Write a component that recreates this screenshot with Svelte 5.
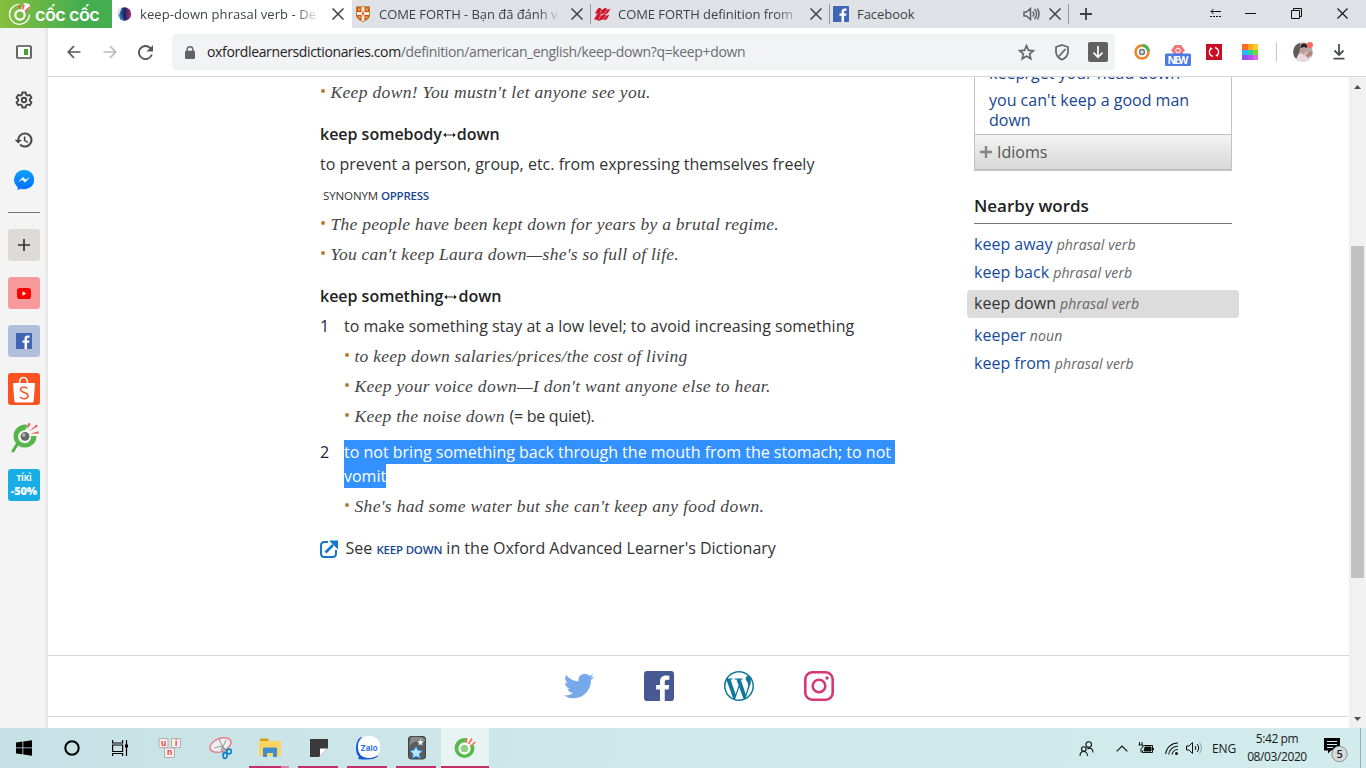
<script>
  const tabs = [
    { title: 'keep-down phrasal verb - Def', icon: 'oxford', active: true, width: 181 },
    { title: 'COME FORTH - Bạn đã đánh v', icon: 'shield', width: 184 },
    { title: 'COME FORTH definition from', icon: 'macmillan', width: 184 },
    { title: 'Facebook', icon: 'facebook', sound: true, width: 166 }
  ];
  const nearby = [
    { word: 'keep away', kind: 'phrasal verb' },
    { word: 'keep back', kind: 'phrasal verb' },
    { word: 'keep down', kind: 'phrasal verb', current: true },
    { word: 'keeper', kind: 'noun' },
    { word: 'keep from', kind: 'phrasal verb' }
  ];
  const fShape = 'M16.6 24V14.7h3.1l.5-3.6h-3.6V8.8c0-1 .3-1.8 1.8-1.8h1.9V3.8c-.3 0-1.5-.2-2.8-.2-2.8 0-4.7 1.7-4.7 4.8v2.7H9.7v3.6h3.1V24z';
</script>

{#snippet cross()}
  <svg class="cross" width="12" height="12" viewBox="0 0 12 12"><path d="M.5.5l11 11M11.5.5l-11 11" stroke="#3f4145" stroke-width="1.5" fill="none" /></svg>
{/snippet}

{#snippet facebook(size, color, radius)}
  <svg width={size} height={size} viewBox="0 0 24 24"><rect width="24" height="24" rx={radius} fill={color} /><path d={fShape} fill="#fff" /></svg>
{/snippet}

{#snippet coccoc(size)}
  <svg width={size} height={size} viewBox="0 0 32 32">
    <path d="M10 22L5 30" stroke="#55b13f" stroke-width="3" stroke-linecap="round" />
    <path d="M20 4A11.5 11.5 0 1 0 28.500 15L23 15A6.5 6.5 0 1 1 17 9.300Z" fill="#55b748" />
    <circle cx="17" cy="15.300" r="4.400" fill="#666" /><circle cx="15.700" cy="14" r="2" fill="#aaa" />
    <path d="M19 8.500l1.200-6.500 2.600.8zM21.500 10.200l7-6.700 1.400 1.800zM22.500 12.800l8-2.600.2 2.300z" fill="#ef5a4c" />
  </svg>
{/snippet}

{#snippet arrow()}
  <svg class="arrow" width="15" height="8" viewBox="0 0 15 8"><path d="M2 4h11" stroke="#333" /><path d="M4 1.800L1.200 4 4 6.200zM11 1.800L13.800 4 11 6.200z" fill="#222" /></svg>
{/snippet}

<div class="screen">
  <header class="tabbar">
    <div class="brand">
      <svg width="24" height="24" viewBox="0 0 24 24" fill="none" stroke="#fff">
        <path d="M12 2.300A10 10 0 1 0 21.500 12.500" stroke-width="1.300" />
        <circle cx="12" cy="13" r="4.700" stroke-width="2.200" />
        <path d="M13 7l3-6 5.500 1 .5 4-5.500 4z" fill="#fff" stroke="none" />
        <path d="M11.800 6.500l-1-4M14.500 7.500l1.700-5M17 9.500l4.500-4.500" stroke="#f6543f" stroke-width="1.500" />
      </svg>
      <span>cốc cốc</span>
    </div>
    {#each tabs as tab}
      <div class="tab" class:active={tab.active}>
        <span class="favicon">
          {#if tab.icon === 'oxford'}
            <svg width="16" height="16" viewBox="0 0 16 16"><defs><linearGradient id="ox" x1="0" y1="0" x2="1" y2="0"><stop offset="0" stop-color="#3b8fc0" /><stop offset=".5" stop-color="#1c2160" /><stop offset=".85" stop-color="#8c2c72" /></linearGradient></defs><circle cx="7.500" cy="8" r="6.700" fill="url(#ox)" /><path d="M1 3l4-2-2.500 7 3 6.500-4-2z" fill="#d8e6f0" /><path d="M1.500 8l3 2 3 4.500-4-1z" fill="#2378ad" /></svg>
          {:else if tab.icon === 'shield'}
            <svg width="16" height="16" viewBox="0 0 16 16"><path d="M1.500.8h13V9c0 3.300-3 5.400-6.500 6.500C4.500 14.400 1.500 12.300 1.500 9z" fill="#d6452b" stroke="#b78a28" /><path d="M6.500 1h3v14h-3zM2 6h12v3H2z" fill="#f7efd8" /><path d="M3 3.500h2.500M10.500 3.500H13M3.500 11.200H5.500M10.500 11.200h2" stroke="#f0bb2a" stroke-width="2" /><path d="M8 5.800v3.400" stroke="#d6452b" stroke-width="1.500" /></svg>
          {:else if tab.icon === 'macmillan'}
            <svg width="17" height="16" viewBox="0 0 17 16"><path d="M1 7.500L3.500 3Q6 .5 7.500 3.500q1.500.5 2.500-1 2-1.500 3 .8 1.500.7 3.500-.8L14 7q-2 2-3.800.2Q8.500 7.500 7 8.500q-2 .8-3-.8zM0 13.500L2.500 9Q5 6.500 6.500 9.500q1.500.5 2.500-1 2-1.500 3 .8 1.500.7 3.500-.8L13 13q-2 2-3.800.2-1.700.3-3.200 1.300-2 .8-3-.8z" fill="#d0152e" /><path d="M7.500 3.500L6 7.500M13 3.300L11 7M6.500 9.500L5 13.500M12 9.300L10 13" stroke="#f4a4aa" stroke-width=".7" /></svg>
          {:else}
            {@render facebook(16, '#4065b4', 1)}
          {/if}
        </span>
        <span class="title" style:width="{tab.width}px" class:fade={!tab.sound}>{tab.title}</span>
        {#if tab.sound}
          <svg width="18" height="14" viewBox="0 0 18 14" fill="none" stroke="#5f6368" stroke-width="1.500"><path d="M1 5h2.500l4-3.500v11L3.500 9H1zM9.800 4.500c1.200 1.500 1.200 3.500 0 5M11.500 2c2.800 2.600 2.800 7.400 0 10M14.300 1.500c2.300 3 2.300 8 0 11" /></svg>
        {/if}
        {@render cross()}
      </div>
    {/each}
    <svg class="newtab" width="12" height="12" viewBox="0 0 12 12"><path d="M6 0v12M0 6h12" stroke="#3c4043" stroke-width="1.800" /></svg>
    <div class="window">
      <svg width="12" height="10" viewBox="0 0 12 10" fill="none" stroke="#111"><path d="M1 3.500h10M3.500 1L1 3.500 3.500 6" /><path d="M0 8.500h12" stroke-dasharray="2 1" /></svg>
      <svg width="11" height="10" viewBox="0 0 11 10"><path d="M0 5.500h11" stroke="#111" /></svg>
      <svg width="11" height="11" viewBox="0 0 11 11" fill="none" stroke="#111"><path d="M.5 2.500h8v8h-8zM2.500 2.500v-2h8v8h-2" /></svg>
      <svg width="11" height="11" viewBox="0 0 11 11"><path d="M.5.5l10 10M10.500.5l-10 10" stroke="#111" stroke-width="1.100" /></svg>
    </div>
  </header>

  <div class="middle">
    <aside class="rail">
      <div class="cell tall"><svg width="16" height="14" viewBox="0 0 16 14"><rect x="1" y="1" width="14" height="12" rx="1" fill="#fff" stroke="#4d4d4d" stroke-width="1.700" /><path d="M8 4h4v6H8z" fill="#43a532" /></svg></div>
      <div class="cell"><svg width="20" height="20" viewBox="0 0 24 24" fill="none" stroke="#444" stroke-width="2.200"><path d="M10 3h4l.6 2.700 1.700 1 2.700-.9 2 3.500-2.100 1.800v1.900l2.100 1.800-2 3.500-2.700-.9-1.700 1L14 21h-4l-.6-2.600-1.700-1-2.700.9-2-3.500 2.100-1.800v-1.900L3 9.300l2-3.500 2.700.9 1.700-1z" stroke-linejoin="round" /><circle cx="12" cy="12" r="2.700" /></svg></div>
      <div class="cell"><svg width="18" height="18" viewBox="1 2 22 20"><path fill="#444" stroke="#444" stroke-width=".4" d="M13 3a9 9 0 0 0-9 9H1l3.900 3.900.1.100L9 12H6c0-3.900 3.100-7 7-7s7 3.100 7 7-3.100 7-7 7c-1.900 0-3.700-.8-4.900-2.100l-1.400 1.400A9 9 0 1 0 13 3zm-1 5v5l4.300 2.500.7-1.200-3.500-2.100V8z" /></svg></div>
      <div class="cell"><svg width="20" height="20" viewBox="0 0 20 20"><defs><linearGradient id="ms" x1="0" y1="0" x2="0" y2="1"><stop stop-color="#0aa2ff" /><stop offset="1" stop-color="#086cff" /></linearGradient></defs><path d="M10 0a10 9.600 0 1 1-3 18.700L3.700 20v-3A9.600 9.600 0 0 1 10 0z" fill="url(#ms)" /><path d="M4 12.300l5-5.300 2.600 2.600L16 7l-5 5.400-2.600-2.600z" fill="#fff" /></svg></div>
      <hr />
      <div class="tile add"><svg width="12" height="12" viewBox="0 0 12 12"><path d="M6 0v12M0 6h12" stroke="#333" stroke-width="1.700" /></svg></div>
      <div class="tile youtube"><svg width="14" height="11" viewBox="0 0 14 11"><rect width="14" height="11" rx="2.800" fill="#f00" /><path d="M5.500 3.200v4.600l3.800-2.300z" fill="#fff" /></svg></div>
      <div class="tile fb">{@render facebook(16, '#4065b4', 0)}</div>
      <div class="tile shopee"><svg width="26" height="30" viewBox="0 0 26 30"><path d="M8.500 9.500C8.500 1.500 16.500 1.500 16.500 9.500" fill="none" stroke="#fff" stroke-width="1.500" /><path d="M2 9h22l-1.300 18q-.2 1.500-2 1.500H5.300q-1.800 0-2-1.500z" fill="#fff" /><path d="M16.500 14.500c-2.500-2-7-2-7 1 0 3.700 7.600 2.300 7.600 6.300 0 3-4.600 4-8.100 1.200" fill="none" stroke="#f9501f" stroke-width="1.500" /></svg></div>
      <div class="tile plain">{@render coccoc(32)}</div>
      <div class="tile tiki"><b>TÍKÌ</b><strong>-50%</strong></div>
    </aside>

    <div class="browser">
      <nav class="toolbar">
        <svg width="14" height="14" viewBox="0 0 14 14" fill="none" stroke="#55585c" stroke-width="1.700"><path d="M13.500 7H1.500M7 1L1.300 7 7 13" /></svg>
        <svg width="14" height="14" viewBox="0 0 14 14" fill="none" stroke="#b9bbbe" stroke-width="1.700"><path d="M.5 7h12M7 1l5.700 6L7 13" /></svg>
        <svg width="15" height="15" viewBox="4 4 16 16"><path fill="#55585c" d="M17.650 6.350A8 8 0 1 0 19.730 14h-2.080A6 6 0 1 1 16.220 7.780L13 11h7V4z" /></svg>
        <div class="address">
          <svg width="10" height="13" viewBox="0 0 10 13"><path d="M2.200 6V3.500a2.800 2.800 0 0 1 5.600 0V6" fill="none" stroke="#5f6368" stroke-width="1.400" /><rect y="4.800" width="10" height="8.200" rx="1" fill="#5f6368" /></svg>
          <p class="url"><span>oxfordlearnersdictionaries.com</span>/definition/american_english/keep-down?q=keep+down</p>
          <svg width="17" height="17" viewBox="2 2 20 20"><path fill="#5f6368" stroke="#5f6368" stroke-width=".4" d="M22 9.240l-7.190-.62L12 2 9.190 8.630 2 9.240l5.460 4.730L5.820 21 12 17.270 18.180 21l-1.630-7.030zM12 15.400l-3.760 2.270 1-4.280-3.320-2.880 4.380-.38L12 6.100l1.710 4.040 4.380.38-3.320 2.880 1 4.280z" /></svg>
          <svg width="16" height="17" viewBox="0 0 16 17" fill="none" stroke="#5f6368" stroke-width="1.700"><path d="M8 1l6 2v5c0 3.700-2.500 6-6 7.800C4.500 14 2 11.700 2 8V3zM11.500 5L5 12.200" /></svg>
          <span class="save"><svg width="12" height="13" viewBox="0 0 12 13" fill="none" stroke="#fff" stroke-width="1.700"><path d="M6 0v11M1.500 6.700L6 11.300l4.500-4.600" /></svg></span>
        </div>
        <div class="extensions">
          <svg width="16" height="16" viewBox="0 0 16 16"><circle cx="8" cy="8" r="6.500" fill="none" stroke="#f08127" stroke-width="2.500" /><path d="M8.500 1.500A6.500 6.500 0 0 1 14.500 7" fill="none" stroke="#4caf50" stroke-width="3" /><circle cx="8" cy="8" r="3.200" fill="#6c7278" /><path d="M8 5.800v4.400M5.800 8h4.400" stroke="#fff" /></svg>
          <svg class="new" width="26" height="22" viewBox="0 0 26 22"><path d="M7 5l3-4h6l3 4 1 2-2 1v2H8V8L6 7z" fill="#ee7777" /><circle cx="13" cy="6.500" r="2.300" fill="none" stroke="#fff" /><rect y="9.500" width="26" height="12.500" rx="1.500" fill="#4b7be5" /><text x="13" y="19.500" text-anchor="middle" fill="#fff" font-family="Open Sans, sans-serif" font-size="10.500" font-weight="700" textLength="21">NEW</text></svg>
          <svg width="16" height="16" viewBox="0 0 16 16"><path d="M0 0h16v16H0z" fill="#cb0d24" /><path d="M7 12.500A4.600 4.600 0 0 1 4.500 5M9 3.500a4.600 4.600 0 0 1 2.500 7.500" fill="none" stroke="#fff" stroke-width="1.300" /><path d="M3.300 6.200L6.800 5 4.500 3zM12.700 9.800L9.200 11l2.300 2z" fill="#fff" /></svg>
          <svg width="16" height="16" viewBox="0 0 16 16"><path d="M0 0h6v6H0z" fill="#ff6a22" /><path d="M6 0h5v6H6z" fill="#ffa51f" /><path d="M11 0h5v6h-5z" fill="#ffcb22" /><path d="M0 6h6v5H0z" fill="#29b8f4" /><path d="M6 6h5v5H6z" fill="#20d49a" /><path d="M11 6h5v5h-5z" fill="#74d936" /><path d="M0 11h6v5H0z" fill="#9450ee" /><path d="M6 11h5v5H6z" fill="#b750f2" /><path d="M11 11h5v5h-5z" fill="#dc65ef" /></svg>
          <i></i>
          <svg class="avatar" width="20" height="20" viewBox="0 0 20 20"><defs><clipPath id="round"><circle cx="10" cy="10" r="9.800" /></clipPath></defs><g clip-path="url(#round)"><path d="M0 0h20v20H0z" fill="#b5a9a5" /><path d="M0 0h7v8l-3 8H0z" fill="#62585a" /><path d="M2 20l3-7 4-3h4l4 2 3 8z" fill="#e6dade" /><path d="M8 11l3 2 2-3-1-4H9z" fill="#c99b90" /><path d="M7.500 6q-.5-4.500 3.500-4.500T14 6l-3-1z" fill="#2a2426" /><path d="M12 13l6-4 2 3-5 4z" fill="#b8847d" /></g><circle cx="17" cy="3" r="3" fill="#ff6666" /></svg>
          <svg width="12" height="16" viewBox="0 0 12 16" fill="none" stroke="#4a4d51" stroke-width="1.800"><path d="M6 0v10.500M1.500 6.500L6 11l4.500-4.500M.5 14.700h11" /></svg>
        </div>
      </nav>

      <div class="viewport">
        <div class="page">
          <div class="columns">
            <main>
              <p class="example first">Keep down! You mustn't let anyone see you.</p>
              <h2>keep somebody{@render arrow()}down</h2>
              <p class="def">to prevent a person, group, etc. from expressing themselves freely</p>
              <p class="synonym">SYNONYM <a href="#oppress">OPPRESS</a></p>
              <p class="example">The people have been kept down for years by a brutal regime.</p>
              <p class="example">You can't keep Laura down—she's so full of life.</p>
              <h2>keep something{@render arrow()}down</h2>
              <ol>
                <li>
                  <p>to make something stay at a low level; to avoid increasing something</p>
                  <p class="example">to keep down salaries/prices/the cost of living</p>
                  <p class="example wide">Keep your voice down—I don't want anyone else to hear.</p>
                  <p class="example">Keep the noise down <span class="gloss">(= be quiet).</span></p>
                </li>
                <li>
                  <p><mark>to not bring something back through the mouth from the stomach; to not&nbsp;<br />vomit</mark></p>
                  <p class="example wide">She's had some water but she can't keep any food down.</p>
                </li>
              </ol>
              <p class="see">
                <svg width="19" height="18" viewBox="0 0 19 18" fill="none" stroke="#1878c8"><path d="M8 2H4.500Q1 2 1 5.500v8Q1 17 4.500 17h8q3.500 0 3.500-3.500V10" stroke-width="2" /><path d="M5.500 12.500L13 5" stroke-width="2.600" /><path d="M9 .5h9v9z" fill="#1878c8" stroke="none" /></svg>
                <span>See <a href="#keep-down">KEEP DOWN</a> in the Oxford Advanced Learner's Dictionary</span>
              </p>
            </main>
            <aside class="related">
              <div class="idioms">
                <a class="cut" href="#head">keep/get your head down</a>
                <a href="#man">you can't keep a good man down</a>
              </div>
              <button><svg width="12" height="12" viewBox="0 0 12 12"><path d="M6 0v12M0 6h12" stroke="#858585" stroke-width="2.400" /></svg>Idioms</button>
              <h3>Nearby words</h3>
              <ul>
                {#each nearby as item}
                  <li class:current={item.current}><a href="#word">{item.word}</a> <em>{item.kind}</em></li>
                {/each}
              </ul>
            </aside>
          </div>
          <footer>
            <svg width="30" height="30" viewBox="0 0 24 24"><path fill="#76a9ea" d="M23.953 4.570a10 10 0 0 1-2.825.775 4.958 4.958 0 0 0 2.163-2.723c-.951.555-2.005.959-3.127 1.184a4.920 4.920 0 0 0-8.384 4.482C7.690 8.095 4.067 6.130 1.640 3.162a4.822 4.822 0 0 0-.666 2.475c0 1.710.87 3.213 2.188 4.096a4.904 4.904 0 0 1-2.228-.616v.06a4.923 4.923 0 0 0 3.946 4.827 4.996 4.996 0 0 1-2.212.085 4.936 4.936 0 0 0 4.604 3.417 9.867 9.867 0 0 1-6.102 2.105c-.39 0-.779-.023-1.170-.067a13.995 13.995 0 0 0 7.557 2.209c9.053 0 13.998-7.496 13.998-13.985 0-.21 0-.42-.015-.63A9.935 9.935 0 0 0 24 4.590z" /></svg>
            {@render facebook(30, '#475993', 2.5)}
            <svg width="30" height="30" viewBox="0 0 24 24"><path fill="#0f7898" d="M21.469 6.825c.84 1.537 1.318 3.300 1.318 5.175 0 3.979-2.156 7.456-5.363 9.325l3.295-9.527c.615-1.540.82-2.771.82-3.864 0-.405-.026-.78-.07-1.110m-7.981.105c.647-.03 1.232-.105 1.232-.105.582-.075.514-.93-.067-.899 0 0-1.755.135-2.880.135-1.064 0-2.850-.15-2.850-.15-.585-.03-.661.855-.075.885 0 0 .54.061 1.125.09l1.680 4.605-2.370 7.080L5.354 6.900c.649-.03 1.234-.1 1.234-.1.585-.075.516-.93-.065-.896 0 0-1.746.138-2.874.138-.2 0-.438-.008-.69-.015C4.911 3.150 8.235 1.215 12 1.215c2.809 0 5.365 1.072 7.286 2.833-.046-.003-.091-.009-.141-.009-1.060 0-1.812.923-1.812 1.914 0 .89.513 1.643 1.060 2.531.411.72.89 1.643.89 2.977 0 .915-.354 1.994-.821 3.479l-1.075 3.585-3.900-11.610zM12 22.784c-1.059 0-2.081-.153-3.048-.437l3.237-9.406 3.315 9.087c.024.053.05.101.078.149-1.120.393-2.325.609-3.582.609M1.211 12c0-1.564.336-3.050.935-4.390L7.290 21.709C3.694 19.960 1.212 16.271 1.211 12M12 0C5.385 0 0 5.385 0 12s5.385 12 12 12 12-5.385 12-12S18.615 0 12 0" /></svg>
            <svg width="30" height="30" viewBox="0 0 30 30" fill="none" stroke="#d63875" stroke-width="2.600"><rect x="1.300" y="1.300" width="27.400" height="27.400" rx="7" /><circle cx="15" cy="15" r="6.300" /><circle cx="23" cy="7" r="1.700" fill="#d63875" stroke="none" /></svg>
          </footer>
        </div>
        <div class="scroll">
          <svg width="7" height="4" viewBox="0 0 7 4"><path d="M0 4l3.500-4L7 4z" fill="#505050" /></svg>
          <div class="thumb"></div>
          <svg width="7" height="4" viewBox="0 0 7 4"><path d="M0 0l3.500 4L7 0z" fill="#505050" /></svg>
        </div>
      </div>
    </div>
  </div>

  <div class="taskbar">
    <div class="launch">
      <svg width="16" height="16" viewBox="0 0 16 16"><path d="M0 2.400l6.500-.9v6H0zM7.300 1.400L16 .2v7.300H7.300zM0 8.300h6.500v6L0 13.500zM7.300 8.300H16v7.500l-8.700-1.200z" fill="#000" /></svg>
    </div>
    <div class="launch"><svg width="16" height="16" viewBox="0 0 16 16"><circle cx="8" cy="8" r="6.700" fill="none" stroke="#000" stroke-width="2" /></svg></div>
    <div class="launch"><svg width="16" height="16" viewBox="0 0 16 16" fill="none" stroke="#000" stroke-width="1.200"><path d="M.6 0v3h10V0M.6 5h10v6.500H.6zM.6 16v-2.500h10V16M14.500 0v16" /><path d="M13 4.500h3v3h-3z" fill="#000" stroke="none" /></svg></div>
    <div class="launch first-app"><svg width="24" height="22" viewBox="0 0 24 22"><g fill="#f3eeeb" stroke="#b5aeab"><path d="M1 1.500h9v9H1zM13.500 1.500h9v9h-9zM6.500 11h10v9.500h-10z" /></g><g fill="#e33a40" font-family="Liberation Sans, sans-serif" font-weight="700" font-size="8.500"><text x="3" y="8.500">u</text><text x="17" y="8.500">i</text><text x="9" y="18">n</text></g></svg></div>
    <div class="launch app"><svg width="24" height="24" viewBox="0 0 24 24"><ellipse cx="11.500" cy="9" rx="11" ry="6.500" transform="rotate(-22 11.500 9)" fill="#f1eff0" stroke="#e17b85" stroke-width="1.400" /><path d="M5 12l8-2M10 3l6 13M17 4l-4 9" stroke="#a2a6aa" stroke-width="1.200" /><path d="M12 10l7 5M12 12l3 7" stroke="#888" /><g fill="none" stroke="#1384c8" stroke-width="1.700"><circle cx="20" cy="15.500" r="2.300" /><ellipse cx="16" cy="19.500" rx="2" ry="2.800" /></g></svg></div>
    <div class="launch app run split"><svg width="22" height="20" viewBox="0 0 22 20"><path d="M1 3V1.500Q1 .5 2 .5h7l1 2.500z" fill="#d99b1c" /><path d="M0 3h21q1 0 1 1v14H0z" fill="#fcd462" /><path d="M4 10.500q0-1 1-1h12q1 0 1 1V19h-4v-4H8v4H4z" fill="#3d8fd0" /></svg></div>
    <div class="launch app run"><svg width="18" height="18" viewBox="0 0 18 18"><path d="M0 0h18v9l-9 9H0z" fill="#3a3a3a" /><path d="M10 17V9.500h7.500z" fill="#fff" /></svg></div>
    <div class="launch app run"><svg width="24" height="24" viewBox="0 0 24 24"><path d="M5 1Q0 4 0 12q0 6 3 9l-1 2q16 2 20-3z" fill="#1557d6" /><rect x="2" width="22" height="22" rx="9.500" fill="#fff" /><text x="13" y="14.500" text-anchor="middle" fill="#1464e8" font-family="Inter, sans-serif" font-weight="600" font-size="8" textLength="17">Zalo</text></svg></div>
    <div class="launch app run"><svg width="18" height="24" viewBox="0 0 18 24"><rect x=".5" y=".5" width="17" height="22.500" rx="2.500" fill="#5e5d5d" stroke="#424242" /><path d="M1 10q8-8 16-5V3Q13 0 3 1z" fill="#8b8b8b" /><path d="M8 10l2 4 5 .5-3.500 3.500 1 4.500-4.500-2-4 2 1-4.500L1.500 14.500l4.500-.6z" fill="#b9e2ff" stroke="#2479ca" /><path d="M12.500 3l1 2 2.500.3-2 1.700.5 2.500-2-1.300-2 1.300.5-2.500L9 5.300l2.500-.3z" fill="#e3edf5" /></svg></div>
    <div class="launch app run current"><svg width="24" height="24" viewBox="0 0 24 24"><circle cx="11.500" cy="12" r="10" fill="#56b948" /><path d="M12.500 8L13 1l8-1 3 3v4l-6 3z" fill="#eef4f4" /><circle cx="11.500" cy="12.500" r="5" fill="#8fd083" stroke="#fff" stroke-width="2.300" /><path d="M13 7l.7-5M15.500 8l3.500-5.500M17.500 10l5-4" stroke="#f26557" stroke-width="1.500" /></svg></div>
    <div class="tray">
      <svg class="people" width="15" height="15" viewBox="0 0 15 15" fill="none" stroke="#111" stroke-width="1.100"><circle cx="9.700" cy="3.500" r="2.800" /><circle cx="4.800" cy="8" r="2.300" /><path d="M1 15c0-6 7.500-6 7.500 0M8.500 8.200c2-2.400 5.700-.5 5.500 3.300" /></svg>
      <svg class="chev" width="12" height="7" viewBox="0 0 12 7"><path d="M.7 6.300L6 1l5.300 5.300" fill="none" stroke="#111" stroke-width="1.200" /></svg>
      <svg class="power" width="16" height="13" viewBox="0 0 16 13" fill="none" stroke="#111"><path d="M5.500 3.500h9v7h-10V8.500M1.500 0v3M4 0v3M.5 3h4.500v2L3 6.500v4M15.500 6v2" /><path d="M7 5h6v4H6z" fill="#111" /></svg>
      <svg class="wifi" width="14" height="13" viewBox="0 0 14 13" fill="none" stroke="#111" stroke-width="1.100"><path d="M.7 12A12 12 0 0 1 13 1M3.700 12.500A9 9 0 0 1 13 4.300M7 12.500a6 6 0 0 1 6-5" /><circle cx="11.500" cy="11.500" r="1.500" fill="#111" stroke="none" /></svg>
      <svg class="sound" width="16" height="14" viewBox="0 0 16 14" fill="none" stroke="#111"><path d="M.5 5h2.500l3.500-3.500v11L3 9H.5zM9 5c1 1.300 1 2.700 0 4M11 3c2.200 2.500 2.200 5.500 0 8" /><path d="M13.500 1.500c2.500 3.500 2.500 7.500 0 11" stroke="#8ba0a1" /></svg>
      <span class="lang">ENG</span>
      <div class="clock"><span>5:42 pm</span><span>08/03/2020</span></div>
      <svg class="notice" width="24" height="25" viewBox="0 0 24 25"><path d="M0 0h16v12.500H7l-3 3v-3H0z" fill="#000" /><path d="M3 3.500h10M3 6.500h10M3 9.500h6" stroke="#d2eaeb" /><circle cx="15.500" cy="16" r="7.700" fill="#d7d9da" stroke="#8d9293" /><text x="15.500" y="20" text-anchor="middle" font-family="Open Sans, sans-serif" font-size="11" font-weight="600" fill="#222">5</text></svg>
      <i></i>
    </div>
  </div>
</div>

<style>
  :global(body) { margin: 0; }
  .screen { width: 1366px; height: 768px; overflow: hidden; display: flex; flex-direction: column; background: #fff; font-family: 'Open Sans', sans-serif; font-size: 16px; }
  .screen :global(svg) { display: block; flex: none; }
  p, h2, h3, ol, ul { margin: 0; padding: 0; }
  a { color: #18458f; text-decoration: none; }

  .tabbar { height: 28px; flex: none; display: flex; background: #dee1e6; }
  .brand { width: 104px; padding-left: 8px; display: flex; align-items: center; gap: 3px; background: linear-gradient(90deg, #87bf3e, #43ad50 75%); color: #fff; }
  .brand span { font: 600 18px/20px Inter, sans-serif; letter-spacing: -.6px; padding-top: 2px; white-space: nowrap; }
  .tab { width: 236px; padding-left: 3px; display: flex; align-items: center; position: relative; font-size: 13px; color: #3f4349; }
  .tab:not(.active)::after { content: ''; position: absolute; right: 0; top: 4px; height: 20px; border-right: 1px solid #96999e; }
  .tab.active { background: #fff; width: 235px; padding-left: 5px; }
  .favicon { width: 24px; flex: none; }
  .active .favicon { width: 23px; }
  .title { flex: none; white-space: nowrap; overflow: hidden; line-height: 20px; letter-spacing: -.05px; }
  .active .title { letter-spacing: .08px; }
  .fade { mask-image: linear-gradient(90deg, #000 86%, transparent 99%); }
  .tab .cross { margin-left: 8px; }
  .active .cross { margin-left: 11px; }
  .newtab { margin: 8px 0 0 11px; }
  .window { margin-left: auto; padding: 0 18px 2px 0; display: flex; align-items: center; }
  .window svg:nth-child(2) { margin-left: 23px; }
  .window svg:nth-child(3) { margin-left: 35px; }
  .window svg:nth-child(4) { margin-left: 35px; }

  .middle { height: 700px; display: flex; }
  .rail { width: 48px; flex: none; background: #f4f4f4; box-shadow: inset -4px 0 4px -3px #ddd; display: flex; flex-direction: column; align-items: center; }
  .cell { height: 40px; display: grid; place-items: center; }
  .cell.tall { height: 48px; padding-bottom: 4px; }
  .rail .cell.tall { height: 48px; box-sizing: content-box; }
  .rail hr { width: 32px; margin: 12px 0 16px; border: 0; border-top: 1px solid #777; flex: none; }
  .cell.tall { margin-bottom: 0; }
  .tile { width: 32px; height: 32px; margin-bottom: 16px; border-radius: 3px; display: grid; place-items: center; flex: none; }
  .add { background: #dddbd7; }
  .youtube { background: #f99b9d; }
  .fb { background: #b0bfdc; }
  .shopee { background: #fa5220; }
  .tiki { background: #18aee5; color: #fff; display: flex; flex-direction: column; align-items: center; justify-content: center; }
  .tiki b { font: 700 8px/12px 'Open Sans', sans-serif; }
  .tiki strong { font: 800 11px/14px 'Open Sans', sans-serif; letter-spacing: -.1px; }

  .browser { width: 1318px; display: flex; flex-direction: column; }
  .toolbar { height: 48px; flex: none; display: flex; align-items: center; padding-left: 19px; gap: 22px; border-bottom: 1px solid #d6d8db; }
  .toolbar > svg:nth-child(3) { margin-left: -1px; }
  .address { width: 923px; height: 36px; margin-left: -3px; padding: 0 7px 0 13px; flex: none; border-radius: 4px; background: #f1f3f4; display: flex; align-items: center; }
  .url { margin: 0 auto 0 12px; font-size: 14px; line-height: 20px; padding-bottom: 1px; color: #696d72; white-space: nowrap; letter-spacing: -.36px; }
  .url span { color: #1f2124; }
  .address > svg:nth-of-type(2) { margin-right: 19px; }
  .address > svg:nth-of-type(3) { margin-right: 18px; }
  .save { width: 20px; height: 20px; border-radius: 2px; background: #616161; display: grid; place-items: center; }
  .extensions { display: flex; align-items: center; margin-left: -3px; }
  .extensions .new { margin: 5px 15px 0; }
  .extensions svg:nth-child(4) { margin-left: 20px; }
  .extensions i { height: 20px; border-left: 1px solid #c5c8cb; margin: 0 16px 0 18px; }
  .extensions svg:last-child { margin-left: 20px; }

  .viewport { height: 651px; display: flex; overflow: hidden; }
  .page { width: 1301px; }
  .columns { height: 578px; display: flex; padding-left: 272px; }
  main { width: 654px; line-height: 24px; color: #333; }
  main p { white-space: nowrap; }
  main h2 { margin: 18px 0 6px; font-size: 16px; line-height: 24px; font-weight: 600; color: #222; display: flex; align-items: center; letter-spacing: -.02px; }
  main h2 :global(.arrow) { margin-top: 2px; }
  .example { margin-top: 6px; padding-left: 10.500px; position: relative; font-family: 'Liberation Serif', serif; font-style: italic; font-size: 17.500px; letter-spacing: .26px; color: #444; }
  .example.first { margin-top: 3px; letter-spacing: .33px; }
  .example.wide { letter-spacing: .33px; }
  .example::before { content: ''; position: absolute; left: 1px; top: 9px; width: 4px; height: 4px; border-radius: 50%; background: #b87a2c; }
  .synonym { margin: 8px 0 -2px; padding-left: 3px; font-size: 11.500px; letter-spacing: -.1px; }
  .synonym a { font-weight: 600; letter-spacing: -.25px; }
  ol { list-style: none; counter-reset: sense; }
  ol li { counter-increment: sense; position: relative; padding-left: 24px; margin-bottom: 12px; }
  ol li::before { content: counter(sense); position: absolute; left: 0; color: #1b2448; }
  mark { background: #3390ff; color: #fff; padding: 1px 0; }
  .gloss { font: 16px 'Open Sans', sans-serif; letter-spacing: -.25px; color: #333; }
  .see { margin-top: 18px; display: flex; align-items: center; gap: 6.500px; }
  .see a { font-size: 11.500px; font-weight: 600; letter-spacing: -.2px; }

  .related { width: 258px; font-size: 16px; }
  .idioms { display: flow-root; height: 57px; padding: 0 14px; border: solid #c2c2c2; border-width: 0 1px; line-height: 20px; }
  .idioms a { display: block; }
  .idioms .cut { margin-top: -14px; padding-bottom: 7px; white-space: nowrap; }
  button { width: 258px; height: 37px; padding: 0 5px; border: 1px solid #c2c2c2; border-bottom-width: 2px; background: linear-gradient(#f3f3f3, #d8d8d8); display: flex; align-items: center; gap: 5px; font: 16px 'Open Sans', sans-serif; color: #555; }
  h3 { height: 52px; border-bottom: 1px solid #777; font-size: 17px; font-weight: 600; line-height: 70px; color: #222; }
  .related ul { list-style: none; padding-top: 6px; }
  .related li { height: 28px; line-height: 28px; white-space: nowrap; }
  .related li a { color: #174a9c; }
  .related em { font-size: 14px; letter-spacing: .1px; color: #666; }
  .related .current { margin: 4px -7px 3px; padding-left: 7px; background: #dcdcdc; border-radius: 4px; line-height: 27px; }
  .related .current a { color: #333; }

  footer { height: 60px; border-top: 1px solid #d5d8d8; border-bottom: 1px solid #d5d8d8; display: flex; align-items: center; padding-left: 516px; gap: 50px; }
  .scroll { width: 17px; background: #f1f1f1; display: flex; flex-direction: column; align-items: center; padding: 8px 0 7px; box-sizing: border-box; }
  .thumb { width: 13px; height: 332px; margin: 157px 0 auto; background: #c1c1c1; }

  .taskbar { height: 40px; flex: none; display: flex; background: linear-gradient(90deg, #c6e1e5, #cee7ea 40%, #d2ebec); }
  .launch { width: 48px; height: 40px; display: grid; place-items: center; flex: none; position: relative; }
  .first-app { width: 52px; }
  .app { width: 49px; }
  .run::after { content: ''; position: absolute; left: 4px; right: 5px; bottom: 0; height: 2px; background: #c32e68; }
  .split::after { background: linear-gradient(90deg, #c32e68 80%, #df7fa4 80%); }
  .current.launch { width: 48px; background: #e8f3f4; }
  .current.launch::after { left: 0; right: 0; }
  .tray { margin-left: auto; display: flex; align-items: center; color: #161a1a; font-size: 12px; letter-spacing: -.4px; }
  .chev { margin-left: 22px; }
  .power { margin-left: 10px; }
  .wifi { margin-left: 11px; }
  .sound { margin-left: 7px; }
  .lang { width: 25px; margin-left: 10px; letter-spacing: -.1px; }
  .clock { width: 60px; margin-left: 10px; display: flex; flex-direction: column; align-items: center; font-size: 12px; line-height: 18px; }
  .notice { margin: 5px 0 0 17px; }
  .tray i { height: 40px; margin-left: 12px; padding-right: 5px; border-left: 1px solid #98b0b1; }
</style>
